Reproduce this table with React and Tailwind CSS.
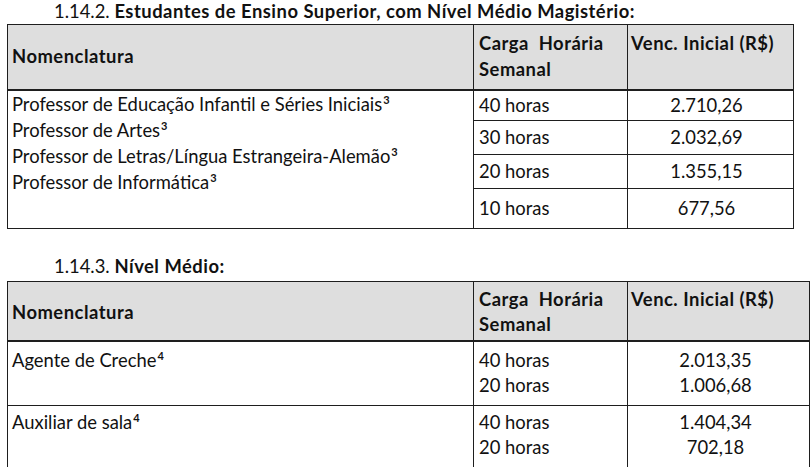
export default function App() {
  const sup = (n) => <sup className="text-[11px] font-bold top-[-7px] ml-[1px]">{n}</sup>;
  const rows1 = [
    ["40 horas", "2.710,26", "h-[29px]"],
    ["30 horas", "2.032,69", "h-[34px]"],
    ["20 horas", "1.355,15", "h-[34px]"],
    ["10 horas", "677,56", "h-[40px]"],
  ];
  const B = "font-bold tracking-[0.5px]";
  return (
    <div className="w-[812px] h-[467px] overflow-hidden bg-white text-[#111] font-['Lato',sans-serif] text-[18.4px]">
      <div className="h-[24px] pl-[54px] leading-[22px] whitespace-nowrap">
        1.14.2. <span className={B}>Estudantes de Ensino Superior, com Nível Médio Magistério:</span>
      </div>
      <div className="ml-[7px] w-[787px] border border-[#1e1e1e]">
        <div className="flex bg-[#dedede] h-[66px] border-b-2 border-[#1e1e1e]">
          <div className={`w-[465px] flex items-center pl-[4px] ${B}`}>Nomenclatura</div>
          <div className={`w-[154px] border-l border-[#1e1e1e] pl-[5px] pt-[5px] leading-[26px] whitespace-nowrap ${B}`}>
            <div>Carga&nbsp; Horária</div>
            <div>Semanal</div>
          </div>
          <div className={`w-[166px] border-l border-[#1e1e1e] pl-[3px] pt-[5px] leading-[26px] whitespace-nowrap ${B}`}>Venc. Inicial (R$)</div>
        </div>
        <div className="flex">
          <div className="w-[465px] pl-[4px] pt-[0px] leading-[26px] whitespace-nowrap">
            <div>Professor de Educação Infantil e Séries Iniciais{sup("3")}</div>
            <div>Professor de Artes{sup("3")}</div>
            <div>Professor de Letras/Língua Estrangeira-Alemão{sup("3")}</div>
            <div>Professor de Informática{sup("3")}</div>
          </div>
          <div className="flex flex-col">
            {rows1.map(([h, v, cls], i) => (
              <div key={i} className={`flex ${cls} ${i > 0 ? "border-t border-[#1e1e1e]" : ""}`}>
                <div className="w-[154px] border-l border-[#1e1e1e] pl-[5px] flex items-center">{h}</div>
                <div className="w-[166px] border-l border-[#1e1e1e] flex items-center justify-center pr-[8px]">{v}</div>
              </div>
            ))}
          </div>
        </div>
      </div>
      <div className="h-[52px] pt-[26px] pl-[54px] leading-[22px]">
        1.14.3. <span className={B}>Nível Médio:</span>
      </div>
      <div className="ml-[7px] w-[803px] border border-[#1e1e1e]">
        <div className="flex bg-[#dedede] h-[60px] border-b-2 border-[#1e1e1e]">
          <div className={`w-[465px] flex items-center pl-[4px] pt-[4px] ${B}`}>Nomenclatura</div>
          <div className={`w-[154px] border-l border-[#1e1e1e] pl-[5px] pt-[5px] leading-[25px] whitespace-nowrap ${B}`}>
            <div>Carga&nbsp; Horária</div>
            <div>Semanal</div>
          </div>
          <div className={`w-[182px] border-l border-[#1e1e1e] pl-[3px] pt-[5px] leading-[25px] whitespace-nowrap ${B}`}>Venc. Inicial (R$)</div>
        </div>
        {[
          ["Agente de Creche", "2.013,35", "1.006,68", "h-[63px]", "pt-[6px]"],
          ["Auxiliar de sala", "1.404,34", "702,18", "h-[63px] border-t border-[#1e1e1e]", "pt-[4px]"],
        ].map(([n, a, b, cls, pt], i) => (
          <div key={i} className={`flex leading-[25px] ${cls}`}>
            <div className={`w-[465px] pl-[4px] ${pt}`}>{n}{sup("4")}</div>
            <div className={`w-[154px] border-l border-[#1e1e1e] pl-[5px] ${pt}`}>
              <div>40 horas</div>
              <div>20 horas</div>
            </div>
            <div className={`w-[182px] border-l border-[#1e1e1e] text-center pr-[6px] ${pt}`}>
              <div>{a}</div>
              <div>{b}</div>
            </div>
          </div>
        ))}
      </div>
    </div>
  );
}
